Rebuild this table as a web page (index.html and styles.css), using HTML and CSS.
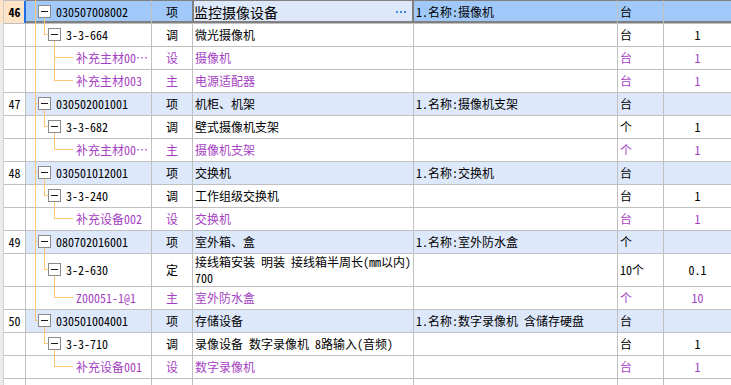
FILE: index.html
```html
<!DOCTYPE html>
<html lang="zh-CN">
<head>
<meta charset="utf-8">
<title>清单</title>
<link rel="stylesheet" href="styles.css">
</head>
<body>
<svg class="defs" width="0" height="0">
  <symbol id="mb" viewBox="0 0 13 14">
    <rect x="0.5" y="0.5" width="12" height="12" fill="#fff" stroke="#8a8a8a"/>
    <path d="M3 6.5H10" stroke="#1a1a1a" fill="none"/>
  </symbol>
</svg>
<div class="sheet">
  <div class="row top sel">
    <div class="gut"></div><div class="num">46</div>
    <div class="code l1"><i class="ln v1"></i><i class="ln h1"></i><i class="ln d1"></i><svg class="box"><use href="#mb"/></svg><span>030507008002</span></div>
    <div class="type">项</div>
    <div class="name edit"><span>监控摄像设备</span><svg class="dots" width="10" height="2"><rect x="0" y="0" width="2" height="2"/><rect x="4" y="0" width="2" height="2"/><rect x="8" y="0" width="2" height="2"/></svg></div>
    <div class="feat">1.名称:摄像机</div><div class="unit">台</div><div class="qty"></div>
  </div>
  <div class="row">
    <div class="gut"></div><div class="num"></div>
    <div class="code l2"><i class="ln v1"></i><i class="ln v2u"></i><i class="ln h2"></i><i class="ln d2"></i><svg class="box"><use href="#mb"/></svg><span>3-3-664</span></div>
    <div class="type">调</div><div class="name">微光摄像机</div><div class="feat"></div><div class="unit">台</div><div class="qty">1</div>
  </div>
  <div class="row mat">
    <div class="gut"></div><div class="num"></div>
    <div class="code l3"><i class="ln v1"></i><i class="ln v3"></i><i class="ln h3"></i><span>补充主材00…</span></div>
    <div class="type">设</div><div class="name">摄像机</div><div class="feat"></div><div class="unit">台</div><div class="qty">1</div>
  </div>
  <div class="row mat">
    <div class="gut"></div><div class="num"></div>
    <div class="code l3"><i class="ln v1"></i><i class="ln v3u"></i><i class="ln h3"></i><span>补充主材003</span></div>
    <div class="type">主</div><div class="name">电源适配器</div><div class="feat"></div><div class="unit">台</div><div class="qty">1</div>
  </div>
  <div class="row top">
    <div class="gut"></div><div class="num">47</div>
    <div class="code l1"><i class="ln v1"></i><i class="ln h1"></i><i class="ln d1"></i><svg class="box"><use href="#mb"/></svg><span>030502001001</span></div>
    <div class="type">项</div><div class="name">机柜、机架</div><div class="feat">1.名称:摄像机支架</div><div class="unit">台</div><div class="qty"></div>
  </div>
  <div class="row">
    <div class="gut"></div><div class="num"></div>
    <div class="code l2"><i class="ln v1"></i><i class="ln v2u"></i><i class="ln h2"></i><i class="ln d2"></i><svg class="box"><use href="#mb"/></svg><span>3-3-682</span></div>
    <div class="type">调</div><div class="name">壁式摄像机支架</div><div class="feat"></div><div class="unit">个</div><div class="qty">1</div>
  </div>
  <div class="row mat">
    <div class="gut"></div><div class="num"></div>
    <div class="code l3"><i class="ln v1"></i><i class="ln v3u"></i><i class="ln h3"></i><span>补充主材00…</span></div>
    <div class="type">主</div><div class="name">摄像机支架</div><div class="feat"></div><div class="unit">个</div><div class="qty">1</div>
  </div>
  <div class="row top">
    <div class="gut"></div><div class="num">48</div>
    <div class="code l1"><i class="ln v1"></i><i class="ln h1"></i><i class="ln d1"></i><svg class="box"><use href="#mb"/></svg><span>030501012001</span></div>
    <div class="type">项</div><div class="name">交换机</div><div class="feat">1.名称:交换机</div><div class="unit">台</div><div class="qty"></div>
  </div>
  <div class="row">
    <div class="gut"></div><div class="num"></div>
    <div class="code l2"><i class="ln v1"></i><i class="ln v2u"></i><i class="ln h2"></i><i class="ln d2"></i><svg class="box"><use href="#mb"/></svg><span>3-3-240</span></div>
    <div class="type">调</div><div class="name">工作组级交换机</div><div class="feat"></div><div class="unit">台</div><div class="qty">1</div>
  </div>
  <div class="row mat">
    <div class="gut"></div><div class="num"></div>
    <div class="code l3"><i class="ln v1"></i><i class="ln v3u"></i><i class="ln h3"></i><span>补充设备002</span></div>
    <div class="type">设</div><div class="name">交换机</div><div class="feat"></div><div class="unit">台</div><div class="qty">1</div>
  </div>
  <div class="row top">
    <div class="gut"></div><div class="num">49</div>
    <div class="code l1"><i class="ln v1"></i><i class="ln h1"></i><i class="ln d1"></i><svg class="box"><use href="#mb"/></svg><span>080702016001</span></div>
    <div class="type">项</div><div class="name">室外箱、盒</div><div class="feat">1.名称:室外防水盒</div><div class="unit">个</div><div class="qty"></div>
  </div>
  <div class="row tall">
    <div class="gut"></div><div class="num"></div>
    <div class="code l2"><i class="ln v1"></i><i class="ln v2u"></i><i class="ln h2"></i><i class="ln d2"></i><svg class="box"><use href="#mb"/></svg><span>3-2-630</span></div>
    <div class="type">定</div><div class="name"><span class="wrap">接线箱安装 明装 接线箱半周长(mm以内)<br>700</span></div><div class="feat"></div><div class="unit">10个</div><div class="qty">0.1</div>
  </div>
  <div class="row mat">
    <div class="gut"></div><div class="num"></div>
    <div class="code l3"><i class="ln v1"></i><i class="ln v3u"></i><i class="ln h3"></i><span>Z00051-1@1</span></div>
    <div class="type">主</div><div class="name">室外防水盒</div><div class="feat"></div><div class="unit">个</div><div class="qty">10</div>
  </div>
  <div class="row top">
    <div class="gut"></div><div class="num">50</div>
    <div class="code l1"><i class="ln v1u"></i><i class="ln h1"></i><i class="ln d1"></i><svg class="box"><use href="#mb"/></svg><span>030501004001</span></div>
    <div class="type">项</div><div class="name">存储设备</div><div class="feat">1.名称:数字录像机 含储存硬盘</div><div class="unit">台</div><div class="qty"></div>
  </div>
  <div class="row">
    <div class="gut"></div><div class="num"></div>
    <div class="code l2"><i class="ln v2u"></i><i class="ln h2"></i><i class="ln d2"></i><svg class="box"><use href="#mb"/></svg><span>3-3-710</span></div>
    <div class="type">调</div><div class="name">录像设备 数字录像机 8路输入(音频)</div><div class="feat"></div><div class="unit">台</div><div class="qty">1</div>
  </div>
  <div class="row mat">
    <div class="gut"></div><div class="num"></div>
    <div class="code l3"><i class="ln v3u"></i><i class="ln h3"></i><span>补充设备001</span></div>
    <div class="type">设</div><div class="name">数字录像机</div><div class="feat"></div><div class="unit">台</div><div class="qty">1</div>
  </div>
  <div class="row">
    <div class="gut"></div><div class="num"></div><div class="code"></div><div class="type"></div><div class="name"></div><div class="feat"></div><div class="unit"></div><div class="qty"></div>
  </div>
</div>
</body>
</html>
```

FILE: styles.css
```css
* { box-sizing: border-box; }
html, body { margin: 0; padding: 0; }
body {
  width: 731px;
  height: 385px;
  overflow: hidden;
  background: #fff;
  color: #000;
  font-family: "Noto Sans CJK SC", "Noto Sans", sans-serif;
  font-size: 12px;
  line-height: 14px;
  font-feature-settings: "hwid" 1;
}
.defs { display: block; width: 0; height: 0; overflow: hidden; }
.sheet { width: 732px; }
.row {
  display: grid;
  grid-template-columns: 4px 22px 126px 41px 221px 204px 46px 68px;
  height: 23px;
}
.row.tall { height: 33px; }
.row > div {
  border-top: 1px solid #c0c0c0;
  border-right: 1px solid #c0c0c0;
  display: flex;
  align-items: center;
  white-space: nowrap;
  overflow: hidden;
  min-width: 0;
}
.row > .gut { border-top: 0; border-right-color: #cfcfcf; background: #ececec; }
.num { justify-content: center; background: #fff; }
.row > .code { position: relative; overflow: visible; }
.l1 { padding-left: 12px; }
.l2 { padding-left: 22px; }
.l3 { padding-left: 50px; }
.box { width: 13px; height: 14px; margin-right: 5px; flex: none; }
.type { justify-content: center; }
.name, .feat, .unit { padding-left: 2px; }
.qty { justify-content: center; }
.wrap { line-height: 16px; }

.ln { position: absolute; display: block; background: #fdc677; width: 1px; }
.v1 { left: 9px; top: -1px; bottom: 0; }
.v1u { left: 9px; top: -1px; height: calc(50% + 1px); }
.h1 { left: 9px; top: calc(50% - 1px); width: 3px; height: 1px; }
.d1 { left: 18px; top: calc(50% + 6px); bottom: 0; }
.v2u { left: 18px; top: -1px; height: calc(50% + 1px); }
.h2 { left: 18px; top: calc(50% - 1px); width: 4px; height: 1px; }
.d2 { left: 28px; top: calc(50% + 6px); bottom: 0; }
.v3 { left: 28px; top: -1px; bottom: 0; }
.v3u { left: 28px; top: -1px; height: calc(50% + 1px); }
.h3 { left: 28px; top: calc(50% - 1px); width: 19px; height: 1px; }

.top > div:nth-child(n+3) { background: #dde8fb; }
.mat { color: #a53fc2; }

.sel > .gut, .sel > .num { background: #fde4c6; }
.sel > .num { font-weight: bold; border-right-color: #1f6fe6; box-shadow: inset -1px 0 #1f6fe6; }
.sel > div:nth-child(n+3) {
  background: #a0c8f8;
  border-top-color: #808080;
  box-shadow: inset 0 -2px #808080;
}
.sel > .type { border-right-color: #808080; }
.sel > .name.edit {
  background: #dde8fb;
  border-right-color: #808080;
  box-shadow: inset 1px 0 #808080, inset -1px 0 #808080, inset 0 -2px #808080;
  font-size: 14px;
  padding-left: 1px;
}
.dots { margin-left: auto; margin-right: 7px; fill: #3c8de0; flex: none; }
```
